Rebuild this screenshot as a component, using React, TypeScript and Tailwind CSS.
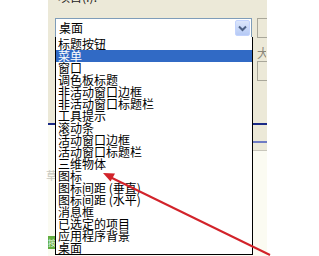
import React from "react";

const items = [
  "标题按钮",
  "菜单",
  "窗口",
  "调色板标题",
  "非活动窗口边框",
  "非活动窗口标题栏",
  "工具提示",
  "滚动条",
  "活动窗口边框",
  "活动窗口标题栏",
  "三维物体",
  "图标",
  "图标间距 (垂直)",
  "图标间距 (水平)",
  "消息框",
  "已选定的项目",
  "应用程序背景",
  "桌面",
];

const cjk = "font-['SimSun','Noto_Sans_CJK_SC',sans-serif]";

export default function App() {
  return (
    <div className={`relative w-[319px] h-[256px] overflow-hidden bg-white flex ${cjk} text-[12px] text-black`}>
      {/* left margin of screenshot */}
      <div className="w-[48px] shrink-0 bg-white" />

      {/* dialog panel */}
      <div className="w-[219px] shrink-0 flex flex-col">
        <div className="h-[123px] bg-[#ece9d8] flex flex-col">
          {/* cut-off label */}
          <div className="h-[18px] overflow-hidden pl-[10px]">
            <div className="-mt-[10px] leading-[14px] text-[12px] text-[#222]">项目(I):</div>
          </div>

          <div className="flex items-start">
            {/* combo box */}
            <div className="ml-[7px] w-[198px] h-[20px] border border-[#7f9db9] bg-white flex items-center justify-between pl-[3px] pr-[1px]">
              <span className="text-[12px] leading-[12px]">桌面</span>
              <div className="w-[15px] h-[16px] rounded-[2px] bg-gradient-to-b from-[#dce6fb] to-[#b6caf5] border border-[#c3d3fd] flex items-center justify-center">
                <svg width="9" height="7" viewBox="0 0 9 7">
                  <path d="M1 1.5 L4.5 5 L8 1.5" fill="none" stroke="#4d6185" strokeWidth="2" />
                </svg>
              </div>
            </div>
            {/* right-hand controls */}
            <div className="ml-[5px] flex flex-col">
              <div className="w-[10px] h-[20px] border border-[#a9a79a] border-r-0 bg-[#ece9d8]" />
              <div className="mt-[8px] h-[14px] leading-[14px] text-[12px] text-[#8a877a] overflow-hidden w-[9px]">大</div>
              <div className="mt-[1px] w-[10px] h-[20px] border border-[#a9a79a] border-r-0 bg-[#ece9d8]" />
            </div>
          </div>
        </div>

        <div className="h-[2px] bg-[#1a2a86]" />

        <div className="flex-1 flex bg-[#fbfbf2]">
          <div className="w-[7px] flex flex-col">
            <div className="mt-[44px] -ml-[2px] text-[11px] leading-[12px] text-[#c8c8c0] overflow-hidden w-[9px]">草</div>
            <div className="mt-auto mb-[7px] h-[13px] bg-[#62ad3e] text-[8px] leading-[13px] text-[#e8f5e0] overflow-hidden">按</div>
          </div>
          <div className="flex-1" />
          <div className="w-[14px] flex flex-col">
            <div className="h-[16px] bg-[#ece9d8]" />
            <div className="h-[2px] bg-[#6f7cc4]" />
            <div className="h-[7px] bg-[#ece9d8]" />
            <div className="h-[1px] bg-[#c8c6bb]" />
          </div>
        </div>
      </div>

      <div className="flex-1 bg-white" />

      {/* open dropdown list */}
      <ul className="absolute left-[55px] top-[37px] w-[198px] border border-black border-t-0 bg-white">
        <li className="h-[1px]" />
        {items.map((it, i) => (
          <li
            key={it}
            className={`h-[12px] leading-[12px] pl-[2px] whitespace-nowrap ${
              i === 1 ? "bg-[#316ac5] text-white" : ""
            }`}
          >
            {it}
          </li>
        ))}
      </ul>

      {/* red annotation arrow */}
      <svg className="absolute left-0 top-0" width="319" height="256" viewBox="0 0 319 256">
        <line x1="110" y1="177" x2="270" y2="255" stroke="#d2232a" strokeWidth="2" />
        <path d="M103 173 L115 173.5 L110.5 181.5 Z" fill="#d2232a" />
      </svg>
    </div>
  );
}
